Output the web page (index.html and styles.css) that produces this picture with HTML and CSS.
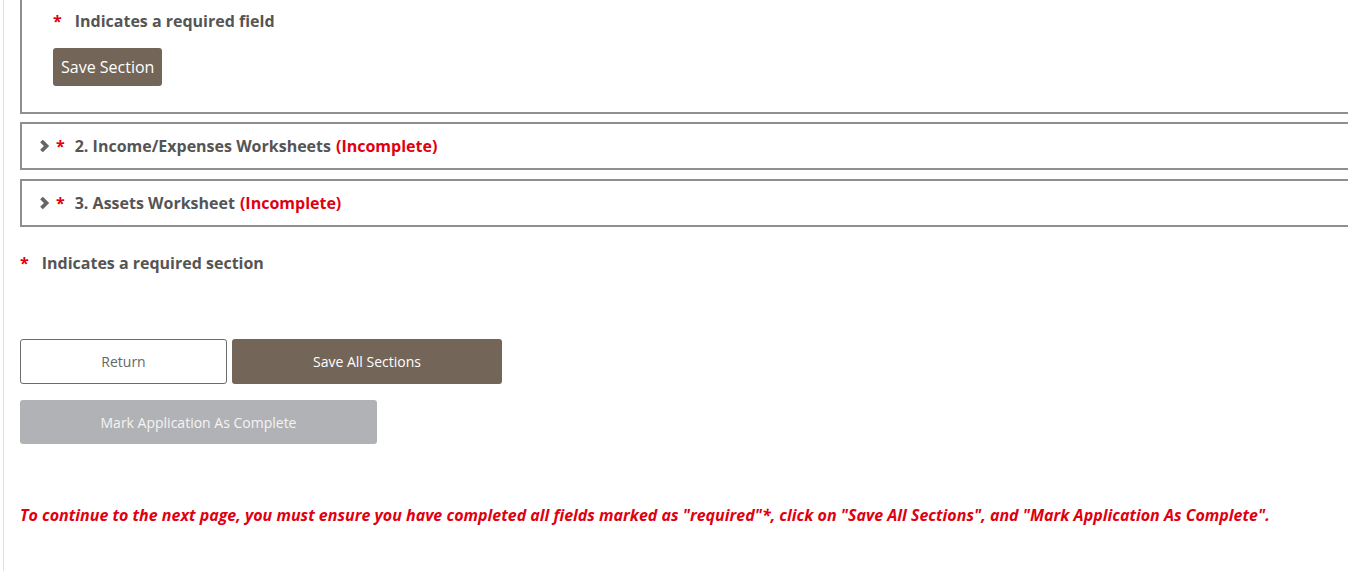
FILE: index.html
```html
<!DOCTYPE html>
<html>
<head>
<meta charset="utf-8">
<link rel="stylesheet" href="styles.css">
</head>
<body>
<div class="page">
  <div class="panel panel-open">
    <p class="req-note"><span class="star">*</span><span>Indicates a required field</span></p>
    <button class="btn-save-section">Save Section</button>
  </div>
  <div class="panel panel-head">
    <svg class="chev" width="11" height="14" viewBox="0 0 11 14"><polyline points="2.5,2 7.5,7 2.5,12" fill="none" stroke="#666" stroke-width="3.8"/></svg>
    <span class="star">*</span>
    <span class="title">2. Income/Expenses Worksheets</span>
    <span class="status">(Incomplete)</span>
  </div>
  <div class="panel panel-head">
    <svg class="chev" width="11" height="14" viewBox="0 0 11 14"><polyline points="2.5,2 7.5,7 2.5,12" fill="none" stroke="#666" stroke-width="3.8"/></svg>
    <span class="star">*</span>
    <span class="title">3. Assets Worksheet</span>
    <span class="status">(Incomplete)</span>
  </div>
  <p class="section-note"><span class="star">*</span><span>Indicates a required section</span></p>
  <div class="actions">
    <div class="row">
      <button class="btn btn-return">Return</button>
      <button class="btn btn-save-all">Save All Sections</button>
    </div>
    <button class="btn btn-complete">Mark Application As Complete</button>
  </div>
  <p class="warning">To continue to the next page, you must ensure you have completed all fields marked as "required"*, click on "Save All Sections", and "Mark Application As Complete".</p>
</div>
</body>
</html>
```
FILE: styles.css
```css
html, body {
  margin: 0;
  padding: 0;
  background: #fff;
  font-family: "Open Sans", "Liberation Sans", sans-serif;
  color: #555;
  overflow: hidden;
}
.page {
  margin-left: 3px;
  border-left: 1px solid #e2e2e2;
  padding-left: 16px;
  min-height: 571px;
  box-sizing: border-box;
}
.panel {
  border: 2px solid #8f8f8f;
  border-right: none;
  box-sizing: border-box;
}
.panel-open {
  border-top: none;
  padding: 10px 0 26px 31px;
  margin-bottom: 8px;
}
.req-note {
  margin: 0;
  font-size: 16px;
  font-weight: 700;
  line-height: 22px;
  display: flex;
  gap: 13px;
}
.star {
  color: #e0000f;
  font-weight: 700;
}
.btn-save-section {
  margin-top: 16px;
  background: #736558;
  color: #fff;
  border: none;
  border-radius: 3px;
  font-family: "Open Sans", "Liberation Sans", sans-serif;
  font-size: 16px;
  height: 38px;
  padding: 0 8px;
  display: block;
}
.panel-head {
  height: 48px;
  display: flex;
  align-items: center;
  padding-left: 17px;
  font-size: 16px;
  font-weight: 700;
  margin-bottom: 9px;
}
.chev {
  margin-right: 6px;
}
.panel-head .star {
  margin-right: 10px;
}
.title {
  color: #555;
  margin-right: 5px;
}
.status {
  color: #e0000f;
}
.section-note {
  margin: 25px 0 0 0;
  font-size: 16px;
  font-weight: 700;
  line-height: 22px;
  display: flex;
  gap: 13px;
}
.actions {
  margin-top: 65px;
  display: flex;
  flex-direction: column;
  gap: 16px;
}
.row {
  display: flex;
  gap: 5px;
}
.btn {
  font-family: "Open Sans", "Liberation Sans", sans-serif;
  font-size: 14px;
  height: 45px;
  border-radius: 3px;
  border: 1px solid transparent;
  box-sizing: border-box;
}
.btn-return {
  width: 207px;
  background: #fff;
  border-color: #6b6b6b;
  color: #666;
}
.btn-save-all {
  width: 270px;
  background: #736558;
  color: #fff;
}
.btn-complete {
  width: 357px;
  height: 44px;
  background: #b1b2b5;
  color: #f4f4f4;
}
.warning {
  margin: 60px 0 0 0;
  color: #e0000f;
  font-size: 16px;
  font-weight: 700;
  font-style: italic;
  line-height: 22px;
}
```
